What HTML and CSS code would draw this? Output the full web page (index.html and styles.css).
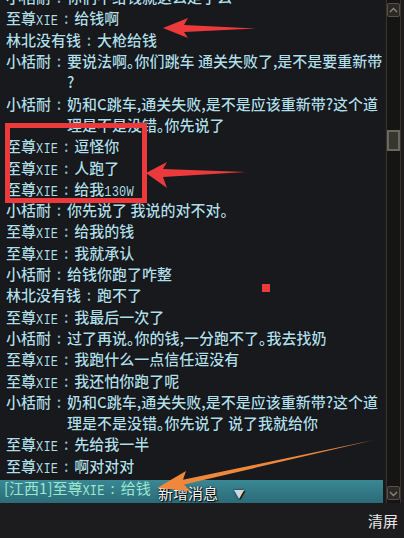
FILE: index.html
```html
<!DOCTYPE html>
<html lang="zh-CN">
<head>
    <meta charset="UTF-8">
    <meta name="viewport" content="width=device-width, initial-scale=1.0">
    <title>聊天记录</title>
    <link rel="stylesheet" href="styles.css">
</head>
<body>
    <div class="screen">
        <div class="chat">
            <div class="log">
                <div class="row"><span class="name">小栝耐</span><span class="colon">:</span><span class="msg">你们不给钱就这么走了么</span></div>
                <div class="row"><span class="name">至尊<span class="en">XIE</span></span><span class="colon">:</span><span class="msg">给钱啊</span></div>
                <div class="row"><span class="name">林北没有钱</span><span class="colon">:</span><span class="msg">大枪给钱</span></div>
                <div class="row"><span class="name">小栝耐</span><span class="colon">:</span><span class="msg">要说法啊。你们跳车 通关失败了,是不是要重新带<br>?</span></div>
                <div class="row"><span class="name">小栝耐</span><span class="colon">:</span><span class="msg">奶和C跳车,通关失败,是不是应该重新带?这个道<br>理是不是没错。你先说了</span></div>
                <div class="row"><span class="name">至尊<span class="en">XIE</span></span><span class="colon">:</span><span class="msg">逗怪你</span></div>
                <div class="row"><span class="name">至尊<span class="en">XIE</span></span><span class="colon">:</span><span class="msg">人跑了</span></div>
                <div class="row"><span class="name">至尊<span class="en">XIE</span></span><span class="colon">:</span><span class="msg">给我<span class="en">130W</span></span></div>
                <div class="row"><span class="name">小栝耐</span><span class="colon">:</span><span class="msg">你先说了 我说的对不对。</span></div>
                <div class="row"><span class="name">至尊<span class="en">XIE</span></span><span class="colon">:</span><span class="msg">给我的钱</span></div>
                <div class="row"><span class="name">至尊<span class="en">XIE</span></span><span class="colon">:</span><span class="msg">我就承认</span></div>
                <div class="row"><span class="name">小栝耐</span><span class="colon">:</span><span class="msg">给钱你跑了咋整</span></div>
                <div class="row"><span class="name">林北没有钱</span><span class="colon">:</span><span class="msg">跑不了</span></div>
                <div class="row"><span class="name">至尊<span class="en">XIE</span></span><span class="colon">:</span><span class="msg">我最后一次了</span></div>
                <div class="row"><span class="name">小栝耐</span><span class="colon">:</span><span class="msg">过了再说。你的钱,一分跑不了。我去找奶</span></div>
                <div class="row"><span class="name">至尊<span class="en">XIE</span></span><span class="colon">:</span><span class="msg">我跑什么一点信任逗没有</span></div>
                <div class="row"><span class="name">至尊<span class="en">XIE</span></span><span class="colon">:</span><span class="msg">我还怕你跑了呢</span></div>
                <div class="row"><span class="name">小栝耐</span><span class="colon">:</span><span class="msg">奶和C跳车,通关失败,是不是应该重新带?这个道<br>理是不是没错。你先说了 说了我就给你</span></div>
                <div class="row"><span class="name">至尊<span class="en">XIE</span></span><span class="colon">:</span><span class="msg">先给我一半</span></div>
                <div class="row"><span class="name">至尊<span class="en">XIE</span></span><span class="colon">:</span><span class="msg">啊对对对</span></div>
            </div>
            <div class="latest">
                <span class="latest-text">[江西1]至尊<span class="en">XIE</span><span class="colon">:</span>给钱</span>
                <span class="new-msg">新增消息 <span class="caret">▼</span></span>
            </div>
        </div>
        <div class="scrollbar">
            <div class="sb-btn">
                <svg width="11" height="11" viewBox="0 0 11 11"><path d="M2 7 L5.5 3.5 L9 7" fill="none" stroke="#8c877a" stroke-width="1.3"/></svg>
            </div>
            <div class="sb-thumb"></div>
            <div class="sb-btn sb-down">
                <svg width="11" height="11" viewBox="0 0 11 11"><path d="M2 4 L5.5 7.5 L9 4" fill="none" stroke="#8c877a" stroke-width="1.3"/></svg>
            </div>
        </div>
    </div>
    <div class="footer">
        <span class="clear-btn">清屏</span>
    </div>

    <!-- 标注 -->
    <svg class="marks" width="404" height="538" viewBox="0 0 404 538">
        <polygon points="163,28 188,18 184,25 256,28.5 184,32 188,38" fill="#ec3a3c"/>
        <rect x="7.5" y="125.5" width="137" height="75" fill="none" stroke="#ec3a3c" stroke-width="5"/>
        <polygon points="146,173 167,162 163,169 246,172 163,177 167,188" fill="#ec3a3c"/>
        <rect x="262" y="284" width="8" height="8" fill="#ec3a3c"/>
        <polygon points="157,488 186,471 183,479.7 374,440 184,484.5 190.5,491" fill="#f0883c"/>
    </svg>
</body>
</html>
```

FILE: styles.css
```css
body {
    margin: 0;
    width: 404px;
    height: 538px;
    overflow: hidden;
    background: #1c1c1f;
    font-family: "Noto Sans CJK SC", sans-serif;
    position: relative;
}

.screen {
    display: flex;
    height: 503px;
}

.chat {
    width: 385px;
    display: flex;
    flex-direction: column;
    background: #18191c;
}

.log {
    height: 480px;
    overflow: hidden;
    display: flex;
    flex-direction: column;
    justify-content: flex-end;
    padding-bottom: 4px;
    box-sizing: border-box;
}

.row {
    display: flex;
    flex: none;
    font-size: 15px;
    font-weight: 500;
    line-height: 21.3px;
    white-space: nowrap;
    color: #b0dfe9;
    text-shadow: 0 0 1px #000;
    font-feature-settings: "halt";
}

.name {
    padding-left: 6px;
}

.colon {
    display: inline-block;
    width: 16px;
    text-align: center;
    color: #8fb9c4;
}

.en {
    display: inline-block;
    font-family: "Liberation Mono", monospace;
    font-size: 12px;
    line-height: 8px;
    transform: scaleY(1.25);
    letter-spacing: 0.2px;
}

.latest {
    position: relative;
    height: 23px;
    margin-right: 2px;
    background: linear-gradient(#3b8794, #2b6b78);
    font-size: 15px;
    line-height: 15px;
    white-space: nowrap;
}

.latest-text {
    padding-left: 4px;
    color: #9ce8cf;
    font-feature-settings: "halt";
}

.latest-text .colon {
    color: #9ce8cf;
}

.new-msg {
    position: absolute;
    left: 158px;
    top: 3px;
    color: #f4f4f4;
    font-size: 15px;
    line-height: 20px;
    text-shadow: 0 0 2px #000, 1px 1px 1px #000;
}

.caret {
    margin-left: 12px;
    font-size: 11px;
    color: #d0d6da;
}

.scrollbar {
    width: 13px;
    margin-left: 1px;
    display: flex;
    flex-direction: column;
    align-items: center;
    border-left: 1px solid #3a342c;
    border-right: 1px solid #3a342c;
    background: #151513;
}

.sb-btn {
    width: 11px;
    height: 12px;
    margin-top: 3px;
    border: 1px solid #56524a;
    border-radius: 2px;
    background: #2a2925;
    display: flex;
    align-items: center;
    justify-content: center;
}

.sb-down {
    margin-top: auto;
    margin-bottom: 3px;
}

.sb-thumb {
    width: 9px;
    height: 17px;
    margin-top: 113px;
    border: 2px solid #6a675d;
    background: #37362f;
}

.footer {
    height: 35px;
    display: flex;
    align-items: center;
    justify-content: flex-end;
    padding-right: 6px;
}

.clear-btn {
    font-size: 15px;
    color: #e8e8e8;
}

.marks {
    position: absolute;
    left: 0;
    top: 0;
    pointer-events: none;
}
```
